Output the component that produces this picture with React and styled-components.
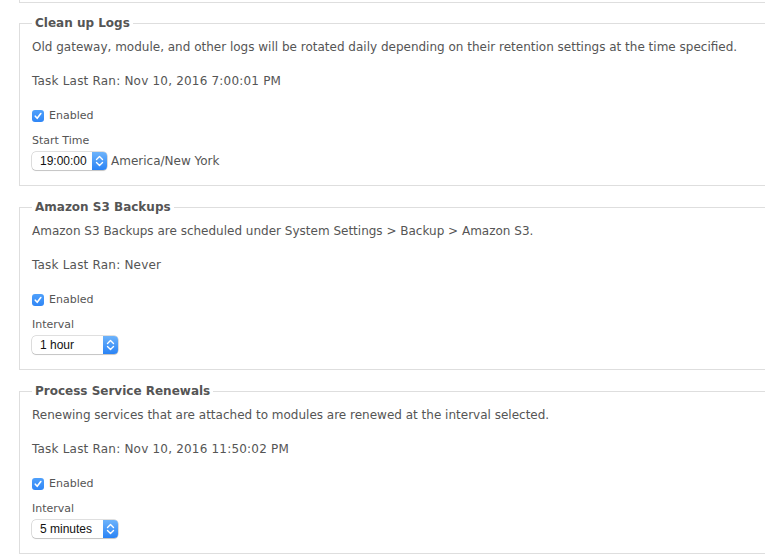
import React from "react";
import styled, { createGlobalStyle } from "styled-components";

const GlobalStyle = createGlobalStyle`
  html, body {
    margin: 0;
    padding: 0;
    background: #fff;
    overflow: hidden;
  }
  body {
    font-family: "DejaVu Sans", Verdana, sans-serif;
    color: #555;
  }
`;

const tasks = [
  {
    title: "Clean up Logs",
    description:
      "Old gateway, module, and other logs will be rotated daily depending on their retention settings at the time specified.",
    lastRan: "Nov 10, 2016 7:00:01 PM",
    field: "Start Time",
    value: "19:00:00",
    width: 75,
    suffix: "America/New York",
  },
  {
    title: "Amazon S3 Backups",
    description:
      "Amazon S3 Backups are scheduled under System Settings > Backup > Amazon S3.",
    lastRan: "Never",
    field: "Interval",
    value: "1 hour",
    width: 86,
  },
  {
    title: "Process Service Renewals",
    description:
      "Renewing services that are attached to modules are renewed at the interval selected.",
    lastRan: "Nov 10, 2016 11:50:02 PM",
    field: "Interval",
    value: "5 minutes",
    width: 86,
  },
];

const SelectBox = ({ value, width }) => {
  return (
    <Select style={{ width }}>
      <SelectValue>{value}</SelectValue>
      <Stepper>
        <svg width="9" height="12" viewBox="0 0 9 12">
          <path
            d="M1.5 4.5 L4.5 1.5 L7.5 4.5 M1.5 7.5 L4.5 10.5 L7.5 7.5"
            fill="none"
            stroke="#fff"
            strokeWidth="1.4"
            strokeLinecap="round"
            strokeLinejoin="round"
          />
        </svg>
      </Stepper>
    </Select>
  );
};

const Check = () => (
  <CheckBox>
    <svg width="10" height="10" viewBox="0 0 10 10">
      <path
        d="M2.3 5.2 L4.2 7.3 L7.8 2.5"
        fill="none"
        stroke="#fff"
        strokeWidth="1.6"
        strokeLinecap="round"
        strokeLinejoin="round"
      />
    </svg>
  </CheckBox>
);

const TaskPanel = ({ task }) => {
  return (
    <Fieldset>
      <Legend>{task.title}</Legend>
      <Text>{task.description}</Text>
      <Text $wide>Task Last Ran: {task.lastRan}</Text>
      <CheckRow>
        <Check />
        <CheckLabel>Enabled</CheckLabel>
      </CheckRow>
      <FieldLabel>{task.field}</FieldLabel>
      <FieldRow>
        <SelectBox value={task.value} width={task.width} />
        {task.suffix && <Suffix>{task.suffix}</Suffix>}
      </FieldRow>
    </Fieldset>
  );
};

const App = () => {
  return (
    <>
      <GlobalStyle />
      <Page>
        <PrevTail />
        {tasks.map((task) => (
          <TaskPanel key={task.title} task={task} />
        ))}
      </Page>
    </>
  );
};

const Page = styled.div`
  display: flex;
  flex-direction: column;
  gap: 14px;
  padding-left: 19px;
  width: 746px;
`;
const PrevTail = styled.div`
  height: 2px;
  border-left: 1px solid #dedede;
  border-bottom: 1px solid #dedede;
  margin-bottom: -1px;
`;
const Fieldset = styled.fieldset`
  margin: 0;
  padding: 0 12px 15px;
  border: 1px solid #dedede;
  border-right: none;
  min-width: 0;
`;
const Legend = styled.legend`
  padding: 0 3px;
  font-size: 12px;
  font-weight: bold;
  line-height: 14px;
  color: #555;
`;
const Text = styled.p`
  margin: 0 0 14px;
  font-size: 12px;
  line-height: 20px;
  color: #555;
  letter-spacing: ${(p) => (p.$wide ? "0.2px" : "0")};
  &:first-of-type {
    margin-top: 7px;
  }
`;
const CheckRow = styled.div`
  display: flex;
  align-items: center;
  height: 16px;
  margin-top: 17px;
`;
const CheckBox = styled.span`
  display: flex;
  align-items: center;
  justify-content: center;
  width: 12px;
  height: 12px;
  border-radius: 3px;
  background: linear-gradient(#4fa0fb, #2f86f6);
  margin-right: 5px;
`;
const CheckLabel = styled.span`
  font-size: 11px;
  line-height: 16px;
  color: #555;
`;
const FieldLabel = styled.div`
  margin-top: 10px;
  font-size: 11px;
  line-height: 14px;
  color: #555;
`;
const FieldRow = styled.div`
  display: flex;
  align-items: center;
  margin-top: 4px;
`;
const Select = styled.div`
  display: flex;
  height: 18px;
  box-sizing: border-box;
  border-radius: 4px;
  background: #fff;
  box-shadow: 0 0 0 0.5px rgba(0, 0, 0, 0.25), 0 1px 1px rgba(0, 0, 0, 0.12);
  overflow: hidden;
`;
const SelectValue = styled.span`
  flex: 1;
  padding-left: 8px;
  font-family: "Liberation Sans", Arial, sans-serif;
  font-size: 12px;
  line-height: 18px;
  color: #111;
  white-space: nowrap;
`;
const Stepper = styled.span`
  display: flex;
  align-items: center;
  justify-content: center;
  width: 15px;
  background: linear-gradient(#6db3fb, #2a83f5);
`;
const Suffix = styled.span`
  margin-left: 4px;
  font-size: 12px;
  line-height: 18px;
  color: #555;
`;

export default App;
